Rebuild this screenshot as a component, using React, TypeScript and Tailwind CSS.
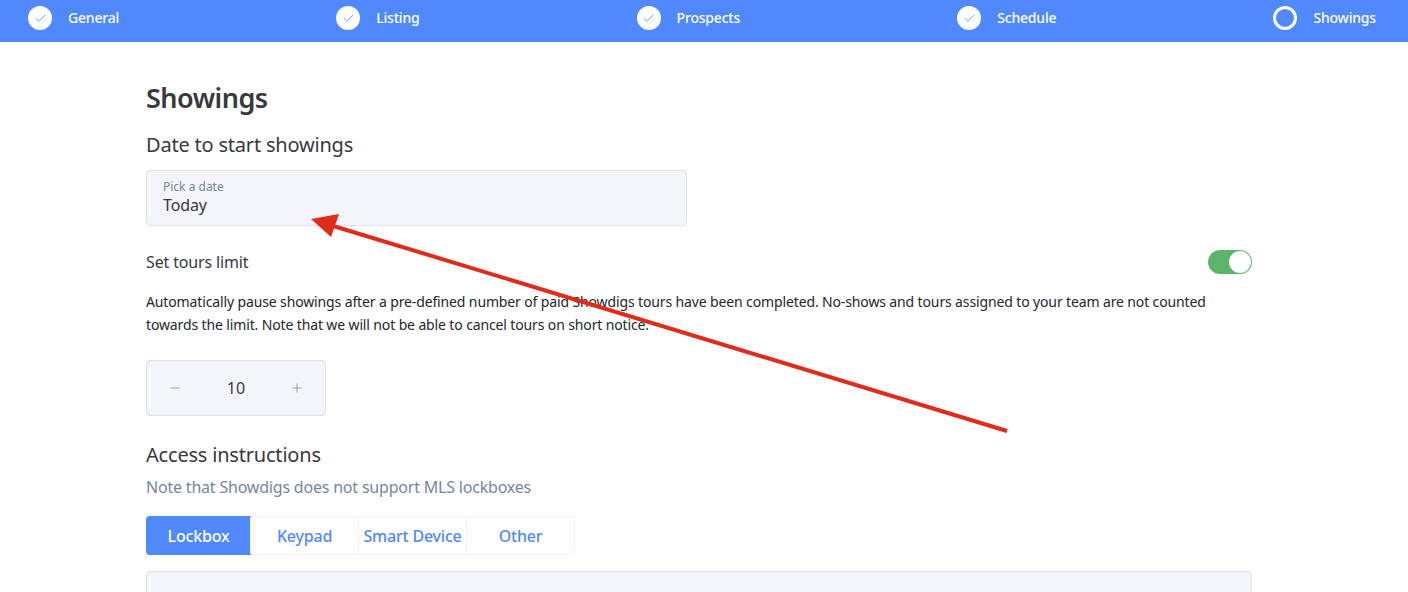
import { useState } from 'react'
import { Check, Minus, Plus } from 'lucide-react'

const steps = [
  { label: 'General', done: true },
  { label: 'Listing', done: true },
  { label: 'Prospects', done: true },
  { label: 'Schedule', done: true },
  { label: 'Showings', done: false },
]

const tabs = ['Lockbox', 'Keypad', 'Smart Device', 'Other']

export default function App() {
  const [tab, setTab] = useState('Lockbox')
  const [limit, setLimit] = useState(10)
  const [limited, setLimited] = useState(true)

  return (
    <div className="relative h-[592px] overflow-hidden bg-white font-['Noto_Sans','Open_Sans',sans-serif] text-[#37393d]">
      {/* steps */}
      <div className="flex h-[42px] items-start justify-between bg-[#5088fd] pl-[28px] pr-[32px] pt-[6px]">
        {steps.map((s) => (
          <div key={s.label} className="flex items-center gap-[16px]">
            {s.done ? (
              <span className="flex h-[24px] w-[24px] items-center justify-center rounded-full bg-white">
                <Check size={13} strokeWidth={1.5} className="text-[#5088fd]" />
              </span>
            ) : (
              <span className="h-[24px] w-[24px] rounded-full border-[3px] border-white" />
            )}
            <span className="text-[14px] font-medium leading-[24px] tracking-[-0.2px] text-white">{s.label}</span>
          </div>
        ))}
      </div>

      <div className="ml-[146px] w-[1106px]">
        <h1 className="mt-[38px] text-[27px] font-semibold leading-[36px] tracking-[-0.5px]">Showings</h1>
        <h2 className="mt-[15px] text-[20px] leading-[28px] tracking-[-0.2px]">Date to start showings</h2>

        <div className="mt-[11px] h-[56px] w-[541px] rounded-[4px] border border-[#dde1e8] bg-[#f4f5f9] px-[16px] pt-[8px]">
          <div className="text-[12px] leading-[15px] text-[#74879b]">Pick a date</div>
          <div className="text-[16px] leading-[22px] tracking-[-0.1px]">Today</div>
        </div>

        <div className="mt-[24px] flex h-[24px] items-center justify-between">
          <span className="text-[16px] tracking-[-0.15px]">Set tours limit</span>
          <button
            onClick={() => setLimited(!limited)}
            className="flex h-[24px] w-[44px] items-center justify-end rounded-full bg-[#5bb46a] pr-[1px]"
          >
            <span className="h-[22px] w-[22px] rounded-full bg-white" />
          </button>
        </div>

        <p className="mt-[16px] text-[14px] leading-[23px] tracking-[-0.13px] text-[#24262a]">
          Automatically pause showings after a pre-defined number of paid Showdigs tours have been completed. No-shows and tours assigned to your team are not counted towards the limit. Note that we will not be able to cancel tours on short notice.
        </p>

        <div className="mt-[24px] flex h-[56px] w-[180px] items-center justify-between rounded-[4px] border border-[#dde1e8] bg-[#f4f5f9] px-[21px]">
          <button onClick={() => setLimit(limit - 1)}>
            <Minus size={14} strokeWidth={1} className="text-[#5c6066]" />
          </button>
          <span className="text-[16px]">{limit}</span>
          <button onClick={() => setLimit(limit + 1)}>
            <Plus size={14} strokeWidth={1} className="text-[#5c6066]" />
          </button>
        </div>

        <h2 className="mt-[25px] text-[20px] leading-[28px] tracking-[-0.2px]">Access instructions</h2>
        <p className="mt-[6px] text-[16px] leading-[24px] tracking-[-0.2px] text-[#74879b]">
          Note that Showdigs does not support MLS lockboxes
        </p>

        <div className="mt-[17px] flex h-[39px] w-[429px] rounded-[4px] border border-[#f1f3f6]">
          {tabs.map((t) => (
            <button
              key={t}
              onClick={() => setTab(t)}
              className={
                t === 'Lockbox'
                  ? '-m-px w-[105px] rounded-l-[4px] bg-[#5088fd] text-[16px] font-medium tracking-[-0.2px] text-white'
                  : "flex-1 border-l border-[#f1f3f6] text-[16px] font-medium tracking-[-0.2px] text-[#5088fd] first:border-l-0"
              }
            >
              {t}
            </button>
          ))}
        </div>

        <div className="mt-[16px] h-[60px] rounded-[4px] border border-[#dde1e8] bg-[#f4f5f9]" />
      </div>

      {/* annotation arrow */}
      <svg className="pointer-events-none absolute inset-0" width="1408" height="592" viewBox="0 0 1408 592">
        <line x1="1007" y1="431" x2="330" y2="225" stroke="#e02b1a" strokeWidth="4" />
        <polygon points="311,219 339,214 331,237" fill="#e02b1a" />
      </svg>
    </div>
  )
}
